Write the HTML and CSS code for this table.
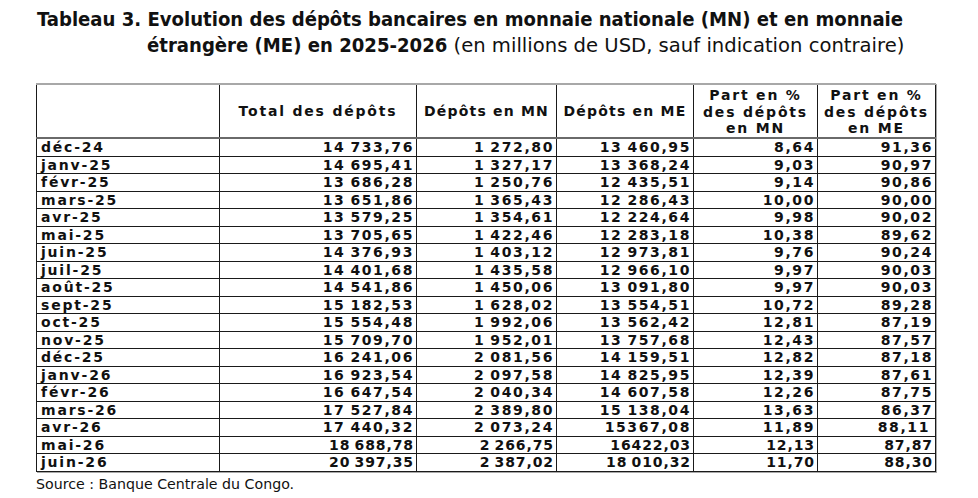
FILE: index.html
```html
<!DOCTYPE html>
<html lang="fr">
<head>
<meta charset="utf-8">
<title>Tableau 3</title>
<link rel="stylesheet" href="styles.css">
</head>
<body>
<h1 class="title"><span class="t-bold">Tableau 3. Evolution des dépôts bancaires en monnaie nationale (MN) et en monnaie</span><br><span class="t-bold">étrangère (ME) en 2025-2026</span><span class="t-reg"> (en millions de USD, sauf indication contraire)</span></h1>
<table class="data">
<colgroup>
<col class="c1"><col class="c2"><col class="c3"><col class="c4"><col class="c5"><col class="c6">
</colgroup>
<thead>
<tr>
<th></th>
<th class="h-wide">Total des dépôts</th>
<th class="h-tight">Dépôts en MN</th>
<th class="h-tight">Dépôts en ME</th>
<th class="h-part">Part en %<br>des dépôts<br>en MN</th>
<th class="h-part">Part en %<br>des dépôts<br>en ME</th>
</tr>
</thead>
<tbody>
<tr><td>déc-24</td><td>14 733,76</td><td>1 272,80</td><td>13 460,95</td><td>8,64</td><td>91,36</td></tr>
<tr><td>janv-25</td><td>14 695,41</td><td>1 327,17</td><td>13 368,24</td><td>9,03</td><td>90,97</td></tr>
<tr><td>févr-25</td><td>13 686,28</td><td>1 250,76</td><td>12 435,51</td><td>9,14</td><td>90,86</td></tr>
<tr><td>mars-25</td><td>13 651,86</td><td>1 365,43</td><td>12 286,43</td><td>10,00</td><td>90,00</td></tr>
<tr><td>avr-25</td><td>13 579,25</td><td>1 354,61</td><td>12 224,64</td><td>9,98</td><td>90,02</td></tr>
<tr><td>mai-25</td><td>13 705,65</td><td>1 422,46</td><td>12 283,18</td><td>10,38</td><td>89,62</td></tr>
<tr><td>juin-25</td><td>14 376,93</td><td>1 403,12</td><td>12 973,81</td><td>9,76</td><td>90,24</td></tr>
<tr><td>juil-25</td><td>14 401,68</td><td>1 435,58</td><td>12 966,10</td><td>9,97</td><td>90,03</td></tr>
<tr><td>août-25</td><td>14 541,86</td><td>1 450,06</td><td>13 091,80</td><td>9,97</td><td>90,03</td></tr>
<tr><td>sept-25</td><td>15 182,53</td><td>1 628,02</td><td>13 554,51</td><td>10,72</td><td>89,28</td></tr>
<tr><td>oct-25</td><td>15 554,48</td><td>1 992,06</td><td>13 562,42</td><td>12,81</td><td>87,19</td></tr>
<tr><td>nov-25</td><td>15 709,70</td><td>1 952,01</td><td>13 757,68</td><td>12,43</td><td>87,57</td></tr>
<tr><td>déc-25</td><td>16 241,06</td><td>2 081,56</td><td>14 159,51</td><td>12,82</td><td>87,18</td></tr>
<tr><td>janv-26</td><td>16 923,54</td><td>2 097,58</td><td>14 825,95</td><td>12,39</td><td>87,61</td></tr>
<tr><td>févr-26</td><td>16 647,54</td><td>2 040,34</td><td>14 607,58</td><td>12,26</td><td>87,75</td></tr>
<tr><td>mars-26</td><td>17 527,84</td><td>2 389,80</td><td>15 138,04</td><td>13,63</td><td>86,37</td></tr>
<tr><td>avr-26</td><td>17 440,32</td><td>2 073,24</td><td>15367,08</td><td>11,89</td><td class="pad-extra">88,11</td></tr>
<tr class="tight"><td>mai-26</td><td>18 688,78</td><td>2 266,75</td><td>16422,03</td><td>12,13</td><td>87,87</td></tr>
<tr class="tight"><td>juin-26</td><td>20 397,35</td><td>2 387,02</td><td>18 010,32</td><td>11,70</td><td>88,30</td></tr>
</tbody>
</table>
<p class="source">Source : Banque Centrale du Congo.</p>
</body>
</html>
```
FILE: styles.css
```css
html, body {
  margin: 0;
  padding: 0;
  background: #ffffff;
  color: #111111;
}

body {
  width: 978px;
  height: 498px;
  overflow: hidden;
  font-family: "DejaVu Sans", Verdana, sans-serif;
}

.title {
  margin: 0;
  padding: 6px 0 0 147px;
  text-indent: -110px;
  font-family: "DejaVu Sans Condensed", "DejaVu Sans", sans-serif;
  font-size: 20.1px;
  font-weight: normal;
  line-height: 26px;
  color: #111111;
  white-space: nowrap;
}

.t-bold {
  font-weight: bold;
}

.t-reg {
  font-family: "DejaVu Sans", sans-serif;
  font-size: 19.6px;
}

.data {
  margin: 24px 0 0 36px;
  width: 899px;
  table-layout: fixed;
  border-collapse: collapse;
  border-top: 2px solid #a8a8a8;
  box-shadow: 1px 1px 0 #a8a8a8;
  font-size: 14px;
  font-weight: bold;
  letter-spacing: 1.8px;
}

.c1 { width: 183px; }
.c2 { width: 197px; }
.c3 { width: 140px; }
.c4 { width: 137px; }
.c5 { width: 124px; }
.c6 { width: 118px; }

.data th {
  height: 50px;
  padding: 0;
  border: 1px solid #1a1a1a;
  border-top: 2px solid #a8a8a8;
  border-bottom: 2px solid #6a6a6a;
  text-align: center;
  vertical-align: middle;
  line-height: 16.5px;
  white-space: nowrap;
  font-weight: bold;
}

.data th.h-tight {
  letter-spacing: 1.2px;
}

.data th.h-part {
  vertical-align: top;
  padding-top: 2px;
}

.data td {
  height: 16.5px;
  padding: 0 2px 0 0;
  border: 1px solid #1a1a1a;
  line-height: 16px;
  text-align: right;
  white-space: nowrap;
  letter-spacing: 1.6px;
  word-spacing: -1.5px;
}

.data td:first-child {
  text-align: left;
  padding: 0 0 0 4px;
  letter-spacing: 1.8px;
  word-spacing: 0;
}

.data td.pad-extra {
  padding-right: 5px;
}

.data tr.tight td {
  letter-spacing: 0.9px;
}

.data tr.tight td:first-child {
  letter-spacing: 1.8px;
}

.source {
  margin: 3px 0 0 36px;
  font-family: "DejaVu Sans", sans-serif;
  font-size: 14.2px;
  line-height: 18px;
  color: #111111;
}
```
